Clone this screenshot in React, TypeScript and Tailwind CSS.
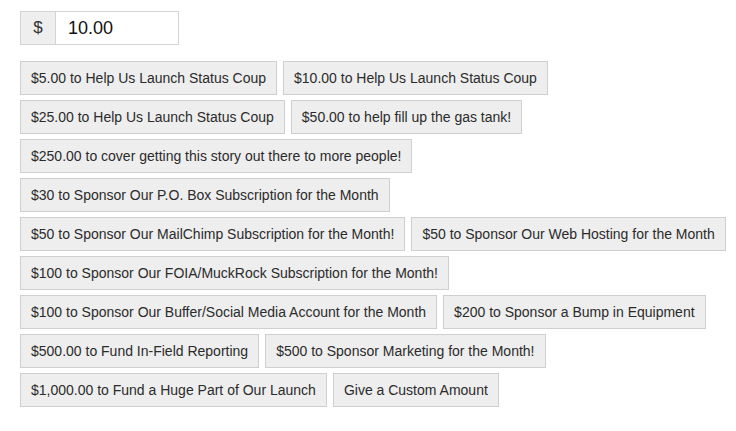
import React from "react";

const rows: string[][] = [
  ["$5.00 to Help Us Launch Status Coup", "$10.00 to Help Us Launch Status Coup"],
  ["$25.00 to Help Us Launch Status Coup", "$50.00 to help fill up the gas tank!"],
  ["$250.00 to cover getting this story out there to more people!"],
  ["$30 to Sponsor Our P.O. Box Subscription for the Month"],
  ["$50 to Sponsor Our MailChimp Subscription for the Month!", "$50 to Sponsor Our Web Hosting for the Month"],
  ["$100 to Sponsor Our FOIA/MuckRock Subscription for the Month!"],
  ["$100 to Sponsor Our Buffer/Social Media Account for the Month", "$200 to Sponsor a Bump in Equipment"],
  ["$500.00 to Fund In-Field Reporting", "$500 to Sponsor Marketing for the Month!"],
  ["$1,000.00 to Fund a Huge Part of Our Launch", "Give a Custom Amount"],
];

export default function App() {
  return (
    <div
      className="w-[736px] h-[431px] bg-white pl-5 pt-[11px] text-[#333333]"
      style={{ fontFamily: '"Liberation Sans", Arial, Helvetica, sans-serif' }}
    >
      <div className="flex h-[34px] w-[159px] border border-[#d4d4d4]">
        <div className="flex w-[35px] items-center justify-center border-r border-[#d4d4d4] bg-[#eeeeee] text-[17px] text-[#333]">
          $
        </div>
        <div className="flex flex-1 items-center bg-white pl-3 text-[18px] text-[#111]">10.00</div>
      </div>
      <div className="mt-4 flex flex-col gap-[5px]">
        {rows.map((row, i) => (
          <div key={i} className="flex gap-[6px]">
            {row.map((label) => (
              <button
                key={label}
                className="h-[34px] whitespace-nowrap border border-[#cfcfcf] bg-[#eeeeee] px-[10px] text-[14px] leading-none text-[#2b2b2b]"
              >
                {label}
              </button>
            ))}
          </div>
        ))}
      </div>
    </div>
  );
}
